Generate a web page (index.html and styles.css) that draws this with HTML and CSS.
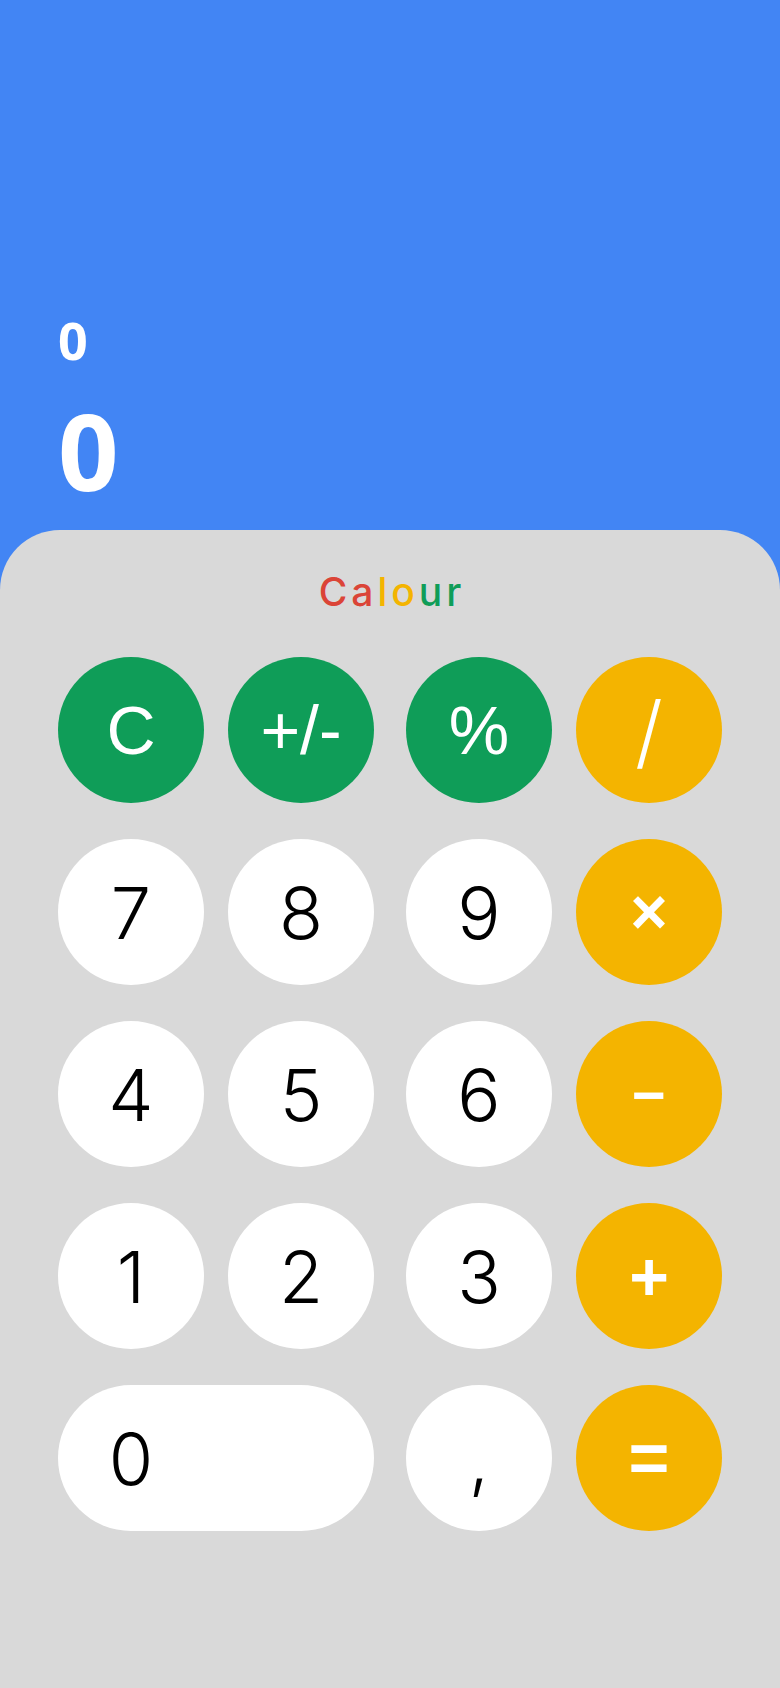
FILE: index.html
```html
<!DOCTYPE html>
<html lang="en">
<head>
<meta charset="utf-8">
<title>Calour</title>
<link rel="stylesheet" href="styles.css">
</head>
<body>
<div class="app">
  <header class="display">
    <div class="prev">0</div>
    <div class="current">0</div>
  </header>
  <main class="pad">
    <h1 class="brand"><span class="red">Ca</span><span class="yellow">lo</span><span class="green">ur</span></h1>
    <div class="keys">
      <button class="key fn">C</button>
      <button class="key fn">+/-</button>
      <button class="key fn">%</button>
      <button class="key op div">/</button>

      <button class="key num">7</button>
      <button class="key num">8</button>
      <button class="key num">9</button>
      <button class="key op mul">×</button>

      <button class="key num">4</button>
      <button class="key num">5</button>
      <button class="key num">6</button>
      <button class="key op sub">−</button>

      <button class="key num">1</button>
      <button class="key num">2</button>
      <button class="key num">3</button>
      <button class="key op add">+</button>

      <button class="key num zero"><span class="zero-label">0</span></button>
      <button class="key num comma">,</button>
      <button class="key op eq">=</button>
    </div>
  </main>
</div>
</body>
</html>
```

FILE: styles.css
```css
* { box-sizing: border-box; }

html, body {
  margin: 0;
  padding: 0;
}

body {
  background: #d9d9d9;
  font-family: "Inter", "Noto Sans", sans-serif;
}

.app {
  min-height: 1688px;
  display: flex;
  flex-direction: column;
  background: #4285f4;
}

.display {
  height: 530px;
  display: flex;
  flex-direction: column;
  justify-content: flex-end;
  padding: 0 58px 27px;
  color: #ffffff;
  font-family: "Open Sans", "Noto Sans", sans-serif;
  font-weight: 700;
}

.prev {
  font-size: 52px;
  line-height: 52px;
  margin-bottom: 31px;
}

.current {
  font-size: 106px;
  line-height: 106px;
}

.pad {
  flex: 1;
  background: #d9d9d9;
  border-radius: 60px 60px 0 0;
  padding: 42px 58px 0;
}

.brand {
  margin: 0 0 45px;
  text-align: center;
  font-family: "Inter", "Noto Sans", sans-serif;
  font-weight: 500;
  font-size: 39px;
  line-height: 40px;
  letter-spacing: 4px;
  padding-left: 4px;
}

.red { color: #db4437; }
.yellow { color: #f4b400; }
.green { color: #0f9d58; }

.keys {
  display: grid;
  grid-template-columns: 170px 178px 170px 146px;
  grid-auto-rows: 146px;
  row-gap: 36px;
}

.key {
  width: 146px;
  height: 146px;
  border: none;
  border-radius: 50%;
  padding: 0;
  margin: 0;
  display: flex;
  align-items: center;
  justify-content: center;
  cursor: pointer;
}

.num {
  background: #ffffff;
  color: #000000;
  font-family: "Inter", "Noto Sans", sans-serif;
  font-weight: 300;
  font-size: 72px;
}

.fn {
  background: #0f9d58;
  color: #ffffff;
  font-family: "Liberation Sans", Arial, sans-serif;
  font-size: 68px;
}

.op {
  background: #f4b400;
  color: #ffffff;
  font-family: "Liberation Sans", Arial, sans-serif;
  font-size: 64px;
  font-weight: 700;
}

.op.div {
  font-family: "Inter", sans-serif;
  font-weight: 300;
  font-size: 80px;
}

.op.mul { font-size: 64px; }
.op.sub { font-size: 58px; }
.op.add { font-size: 68px; }
.op.eq { font-size: 70px; }

.zero {
  grid-column: span 2;
  width: 316px;
  border-radius: 73px;
  justify-content: flex-start;
}

.zero-label {
  width: 146px;
  text-align: center;
}
```
